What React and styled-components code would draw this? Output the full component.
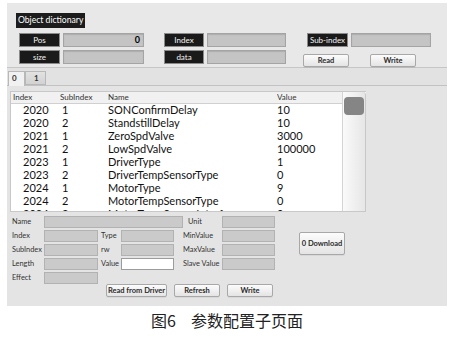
import React from 'react';
import styled, { createGlobalStyle } from 'styled-components';

const Global = createGlobalStyle`
  html, body { margin: 0; padding: 0; background: #fff; }
  body { font-family: Lato, "Open Sans", "Liberation Sans", sans-serif; color: #222; }
  * { box-sizing: border-box; }
`;

const Page = styled.div`
  width: 454px;
  height: 339px;
  padding: 3px 7px 0;
  display: flex;
  flex-direction: column;
`;

const Panel = styled.div`
  width: 440px;
  height: 303px;
  background: #e4e4e4;
  display: flex;
  flex-direction: column;
`;

const Top = styled.div`
  height: 65px;
  padding: 4px 0 0 9px;
  background: #e8e8e8;
  border-bottom: 1px solid #c6c6c6;
`;

const Title = styled.div`
  display: inline-block;
  height: 15px;
  line-height: 15px;
  padding: 0 2px;
  background: #1c1c1c;
  color: #fff;
  font-size: 8.6px;
  white-space: nowrap;
`;

const Groups = styled.div`
  display: flex;
  margin: 5px 0 0 3px;
`;

const Group = styled.div`
  display: grid;
  grid-template-columns: ${p => p.$label}px ${p => p.$field}px;
  grid-template-rows: 14px 14px;
  column-gap: 3px;
  row-gap: 3px;
  margin-right: ${p => p.$gap || 0}px;
`;

const DarkLabel = styled.div`
  width: ${p => (p.$w ? `${p.$w}px` : 'auto')};
  height: ${p => (p.$h ? `${p.$h}px` : 'auto')};
  background: #1a1a1a;
  border: 1px solid #8a8a8a;
  color: #f2f2f2;
  font-size: 8px;
  display: flex;
  align-items: center;
  justify-content: center;
  white-space: nowrap;
`;

const TopField = styled.div`
  width: ${p => (p.$w ? `${p.$w}px` : 'auto')};
  height: ${p => (p.$h ? `${p.$h}px` : 'auto')};
  background: #c4c4c4;
  border: 1px solid #a4a4a4;
  box-shadow: inset 0 1px 1px rgba(0, 0, 0, 0.12);
  font-size: 9px;
  font-weight: 700;
  color: #000;
  text-align: right;
  padding-right: 3px;
  line-height: 12px;
`;

const SubGroup = styled.div`
  display: flex;
  flex-direction: column;
`;

const SubRow = styled.div`
  display: flex;
  gap: ${p => p.$gap}px;
  padding-left: ${p => p.$indent || 0}px;
  margin-top: ${p => p.$top || 0}px;
`;

const Button = styled.button`
  width: ${p => p.$w}px;
  height: ${p => p.$h || 13}px;
  padding: 0;
  background: linear-gradient(#fcfcfc, #e4e4e4);
  border: 1px solid #a8a8a8;
  border-radius: 2px;
  font-family: Lato, "Open Sans", sans-serif;
  font-size: 7.5px;
  font-weight: 700;
  color: #2a2a2a;
  white-space: nowrap;
  box-shadow: 0 1px 0 rgba(0, 0, 0, 0.05);
`;

const TabBar = styled.div`
  height: 18px;
  display: flex;
  align-items: flex-end;
  padding-left: 1px;
  background: #e2e2e2;
  border-bottom: 1px solid #c2c2c2;
`;

const Tab = styled.div`
  width: ${p => p.$w}px;
  height: ${p => (p.$active ? 15 : 14)}px;
  margin-bottom: ${p => (p.$active ? -1 : 0)}px;
  background: ${p => (p.$active ? '#f1f1f1' : 'linear-gradient(#e2e2e2, #d2d2d2)')};
  border: 1px solid #b8b8b8;
  border-bottom: ${p => (p.$active ? 'none' : '1px solid #b8b8b8')};
  font-size: 8px;
  font-weight: 700;
  color: #333;
  padding-left: ${p => (p.$active ? 3 : 8)}px;
  line-height: 13px;
`;

const Pane = styled.div`
  padding: 5px 0 0 3px;
  display: flex;
`;

const TableFrame = styled.div`
  display: flex;
  height: 121px;
  border: 1px solid #c8c8c8;
  border-right: none;
  background: #fff;
`;

const Table = styled.div`
  width: 331px;
  overflow: hidden;
`;

const HeaderRow = styled.div`
  display: grid;
  grid-template-columns: 48px 48px 169px 1fr;
  height: 12px;
  background: #f1f1f1;
  border-bottom: 1px solid #d0d0d0;
  font-size: 8px;
  line-height: 11px;
  color: #333;
  padding-left: 1px;
`;

const Row = styled.div`
  display: grid;
  grid-template-columns: 48px 48px 169px 1fr;
  height: 13px;
  font-size: 11px;
  line-height: 12px;
  color: #111;
  padding-left: 1px;
  white-space: nowrap;
`;

const Cell = styled.div`
  padding-left: ${p => p.$pad || 0}px;
  overflow: hidden;
`;

const ScrollTrack = styled.div`
  width: 24px;
  background: linear-gradient(90deg, #fafafa, #e6e6e6);
  border-left: 1px solid #d4d4d4;
  border-right: 1px solid #c8c8c8;
  border-radius: 0 3px 0 0;
  padding: 5px 0 0 1px;
`;

const ScrollHandle = styled.div`
  width: 20px;
  height: 18px;
  background: #858585;
  border-radius: 4px;
`;

const Form = styled.div`
  padding: 4px 0 0 5px;
  display: flex;
  flex-direction: column;
`;

const FormGrid = styled.div`
  display: grid;
  grid-template-columns: 32px 54px 23px 53px 48px 53px 24px 46px;
  grid-template-rows: repeat(5, 12px);
  row-gap: 2px;
`;

const Label = styled.div`
  grid-column: ${p => p.$col};
  grid-row: ${p => p.$row};
  font-size: 7.4px;
  line-height: 12px;
  color: #333;
  padding-left: ${p => p.$pad || 0}px;
  white-space: nowrap;
`;

const Field = styled.div`
  grid-column: ${p => p.$col};
  grid-row: ${p => p.$row};
  width: ${p => (p.$w ? `${p.$w}px` : 'auto')};
  background: ${p => (p.$white ? '#fff' : '#cacaca')};
  border: 1px solid ${p => (p.$white ? '#9c9c9c' : '#b2b2b2')};
`;

const DownloadCell = styled.div`
  grid-column: 8;
  grid-row: 2 / 4;
  display: flex;
  align-items: center;
`;

const ButtonRow = styled.div`
  display: flex;
  gap: 7px;
  margin: 0 0 0 94px;
`;

const Caption = styled.div`
  margin-top: 4px;
  text-align: center;
  font-family: "Noto Sans CJK SC", sans-serif;
  font-size: 16px;
  line-height: 20px;
  color: #222;
`;

const Gap = styled.span`
  display: inline-block;
  width: 15px;
`;

const rows = [
  ['2020', '1', 'SONConfirmDelay', '10'],
  ['2020', '2', 'StandstillDelay', '10'],
  ['2021', '1', 'ZeroSpdValve', '3000'],
  ['2021', '2', 'LowSpdValve', '100000'],
  ['2023', '1', 'DriverType', '1'],
  ['2023', '2', 'DriverTempSensorType', '0'],
  ['2024', '1', 'MotorType', '9'],
  ['2024', '2', 'MotorTempSensorType', '0'],
  ['2024', '3', 'MotorTempSensorInterface', '0'],
];

export default function App() {
  return (
    <Page>
      <Global />
      <Panel>
        <Top>
          <Title>Object dictionary</Title>
          <Groups>
            <Group $label={41} $field={81} $gap={20}>
              <DarkLabel>Pos</DarkLabel>
              <TopField>0</TopField>
              <DarkLabel>size</DarkLabel>
              <TopField />
            </Group>
            <Group $label={40} $field={79} $gap={17}>
              <DarkLabel>Index</DarkLabel>
              <TopField />
              <DarkLabel>data</DarkLabel>
              <TopField />
            </Group>
            <SubGroup>
              <SubRow $gap={3} $indent={4}>
                <DarkLabel $w={41} $h={14}>Sub-index</DarkLabel>
                <TopField $w={80} $h={14} />
              </SubRow>
              <SubRow $gap={21} $top={7}>
                <Button $w={46}>Read</Button>
                <Button $w={46}>Write</Button>
              </SubRow>
            </SubGroup>
          </Groups>
        </Top>
        <TabBar>
          <Tab $w={17} $active>0</Tab>
          <Tab $w={21}>1</Tab>
        </TabBar>
        <Pane>
          <TableFrame>
            <Table>
              <HeaderRow>
                <Cell $pad={1}>Index</Cell>
                <Cell>SubIndex</Cell>
                <Cell>Name</Cell>
                <Cell>Value</Cell>
              </HeaderRow>
              {rows.map((r, i) => (
                <Row key={i}>
                  <Cell $pad={11}>{r[0]}</Cell>
                  <Cell $pad={2}>{r[1]}</Cell>
                  <Cell>{r[2]}</Cell>
                  <Cell>{r[3]}</Cell>
                </Row>
              ))}
            </Table>
            <ScrollTrack>
              <ScrollHandle />
            </ScrollTrack>
          </TableFrame>
        </Pane>
        <Form>
          <FormGrid>
            <Label $col={1} $row={1}>Name</Label>
            <Field $col="2 / 6" $row={1} $w={139} />
            <Label $col={5} $row={1} $pad={14}>Unit</Label>
            <Field $col={6} $row={1} />

            <Label $col={1} $row={2}>Index</Label>
            <Field $col={2} $row={2} />
            <Label $col={3} $row={2} $pad={3}>Type</Label>
            <Field $col={4} $row={2} />
            <Label $col={5} $row={2} $pad={9}>MinValue</Label>
            <Field $col={6} $row={2} />

            <Label $col={1} $row={3}>SubIndex</Label>
            <Field $col={2} $row={3} />
            <Label $col={3} $row={3} $pad={3}>rw</Label>
            <Field $col={4} $row={3} />
            <Label $col={5} $row={3} $pad={9}>MaxValue</Label>
            <Field $col={6} $row={3} />

            <Label $col={1} $row={4}>Length</Label>
            <Field $col={2} $row={4} />
            <Label $col={3} $row={4} $pad={3}>Value</Label>
            <Field $col={4} $row={4} $white />
            <Label $col={5} $row={4} $pad={9}>Slave Value</Label>
            <Field $col={6} $row={4} />

            <Label $col={1} $row={5}>Effect</Label>
            <Field $col={2} $row={5} />

            <DownloadCell>
              <Button $w={46} $h={23}>0 Download</Button>
            </DownloadCell>
          </FormGrid>
          <ButtonRow>
            <Button $w={61}>Read from Driver</Button>
            <Button $w={46}>Refresh</Button>
            <Button $w={46}>Write</Button>
          </ButtonRow>
        </Form>
      </Panel>
      <Caption>
        图6<Gap />参数配置子页面
      </Caption>
    </Page>
  );
}
